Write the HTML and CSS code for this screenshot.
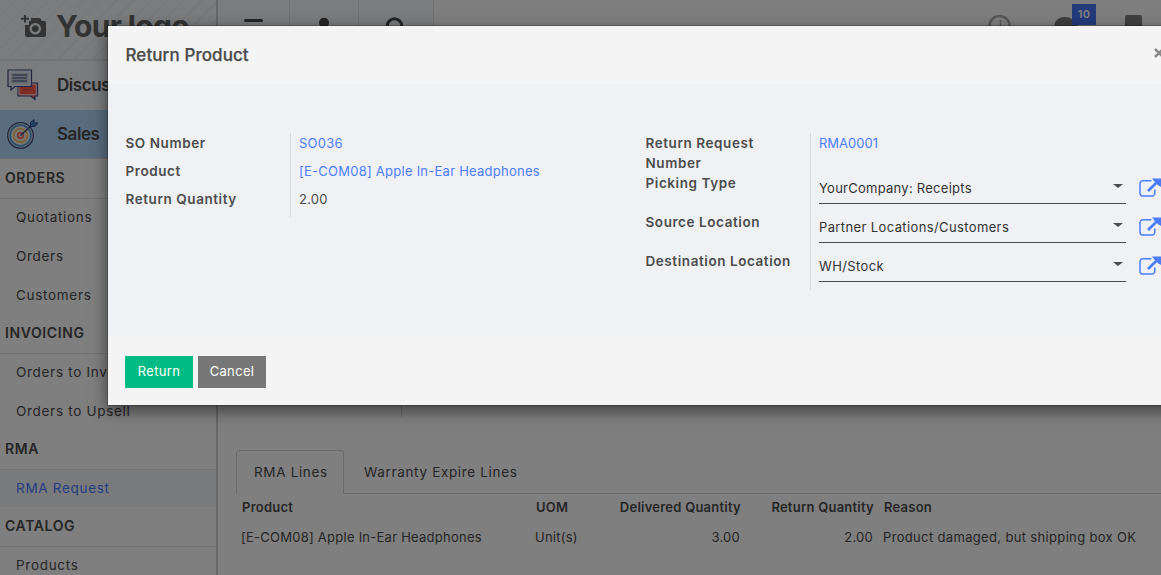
FILE: index.html
```html
<!DOCTYPE html>
<html lang="en">
<head>
<meta charset="utf-8">
<title>Return Product</title>
<link rel="stylesheet" href="styles.css">
</head>
<body>
<svg class="defs" width="0" height="0">
  <symbol id="external" viewBox="0 0 22 20">
    <path d="M12.400 2.800H4A2.700 2.700 0 0 0 1 5.500V15.300A2.700 2.700 0 0 0 4 18H13A2.700 2.700 0 0 0 15.800 15.300V11.500" fill="none" stroke="currentColor" stroke-width="1.500"/>
    <path d="M9 13 18 4.300" fill="none" stroke="currentColor" stroke-width="2.700"/>
    <path d="M13 .500H22V9L19.200 7.200 15.300 3.400Z" fill="currentColor"/>
  </symbol>
</svg>
<div class="app">
  <aside class="sidebar">
    <div class="logo">
      <svg width="26" height="24" viewBox="0 0 26 24">
        <path fill="#666" fill-rule="evenodd" d="M11 4h9l2 3h2q2 0 2 2v12q0 2-2 2H7q-2 0-2-2V11h4V7h2ZM15.300 9a5.700 5.700 0 1 0 .01 0ZM15.300 11.300a3.400 3.400 0 1 1-.01 0Z"/>
        <path d="M5 1v7.500M1 4.700h8" stroke="#666" stroke-width="2"/>
      </svg>
      <span>Your logo</span>
    </div>
    <div class="app-link">
      <svg width="32" height="32" viewBox="0 0 32 32">
        <path d="M11 14H30.500V27H28V30.500L23.500 27H11Z" fill="#ff5c4d" stroke="#414c82" stroke-width="1.200"/>
        <path d="M12 15.200H29.300V25.800H12Z" fill="none" stroke="#e8edf8" stroke-width="1"/>
        <path d="M1 1H24.500V17.500H8L4 21V17.500H1Z" fill="#e8edf8" stroke="#414c82" stroke-width="1.200"/>
        <path d="M4 4H21.500V14.500H4Z" fill="#c8d0e0"/>
        <path d="M5.500 6H20M5.500 9H20M5.500 12H20" stroke="#6c7894" stroke-width="1.300"/>
        <path d="M17.500 20.500h7" stroke="#a8483f" stroke-dasharray="1.500 1"/>
      </svg>
      <span>Discuss</span>
    </div>
    <div class="app-link active">
      <svg width="32" height="32" viewBox="0 0 32 32">
        <circle cx="13.500" cy="17.500" r="12.800" fill="#f5f2ec" stroke="#414c82" stroke-width="1.300"/>
        <circle cx="13.500" cy="17.500" r="10.400" fill="none" stroke="#5aa2dc" stroke-width="2"/>
        <circle cx="13.500" cy="17.500" r="6.800" fill="none" stroke="#f0c878" stroke-width="2"/>
        <circle cx="13.500" cy="17.500" r="2.800" fill="#ffd8cc" stroke="#f0705c" stroke-width="1.800"/>
        <path d="M13.500 17.500 26 6" stroke="#414c82" stroke-width="1.300"/>
        <path d="M23.500 8.500V4.500L27 1.500V4.800L31 5 28 8.500Z" fill="#3d88d6" stroke="#414c82"/>
      </svg>
      <span>Sales</span>
    </div>
    <h4 class="first">ORDERS</h4>
    <a>Quotations</a>
    <a>Orders</a>
    <a>Customers</a>
    <h4>INVOICING</h4>
    <a>Orders to Invoice</a>
    <a>Orders to Upsell</a>
    <h4>RMA</h4>
    <a class="current">RMA Request</a>
    <h4>CATALOG</h4>
    <a>Products</a>
  </aside>
  <main class="main">
    <header class="topbar">
      <div class="tool"><svg width="22" height="20" viewBox="0 0 22 20"><path d="M3.500 3.500h16M3.500 10.800h16M3.500 18h16" stroke="#4c4c4c" stroke-width="3" stroke-linecap="round"/></svg></div>
      <div class="tool"><svg width="22" height="20" viewBox="0 0 22 20"><circle cx="10" cy="5.700" r="5" fill="#4c4c4c"/><path d="M1 20q1-8 9-8t9 8Z" fill="#4c4c4c"/></svg></div>
      <div class="tool"><svg width="22" height="20" viewBox="0 0 22 20"><circle cx="11.500" cy="9" r="7.200" fill="none" stroke="#4c4c4c" stroke-width="3"/><path d="m16 14 5 5" stroke="#4c4c4c" stroke-width="3"/></svg></div>
      <div class="systray">
        <svg width="24" height="24" viewBox="0 0 24 24"><circle cx="11.500" cy="12" r="10" fill="none" stroke="#b0b0b0" stroke-width="2.500"/><path d="M12.500 6v7H8" fill="none" stroke="#b0b0b0" stroke-width="1.500"/></svg>
        <div class="chat">
          <svg width="28" height="22" viewBox="0 0 28 22"><ellipse cx="11" cy="9" rx="10.500" ry="8" fill="#7c7c7c"/><path d="M22 8q8 5 1 12l3 2-9-2Z" fill="#7c7c7c"/></svg>
          <span class="badge">10</span>
        </div>
        <svg class="bookmark" width="17" height="20" viewBox="0 0 17 20"><path d="M2 0h13q2 0 2 2v18l-8.500-6L0 20V2q0-2 2-2Z" fill="#808080"/></svg>
      </div>
    </header>
    <section class="sheet">
      <div class="rule"></div>
      <nav class="tabs"><span class="tab on">RMA Lines</span><span class="tab">Warranty Expire Lines</span></nav>
      <div class="grid head"><span>Product</span><span>UOM</span><span class="num">Delivered Quantity</span><span class="num">Return Quantity</span><span>Reason</span></div>
      <div class="grid row"><span>[E-COM08] Apple In-Ear Headphones</span><span>Unit(s)</span><span class="num">3.00</span><span class="num">2.00</span><span class="reason">Product damaged, but shipping box OK</span></div>
    </section>
  </main>
</div>
<div class="backdrop">
  <div class="modal">
    <header class="modal-head"><h3>Return Product</h3><svg class="close" width="10" height="10" viewBox="0 0 10 10"><path d="m1 1 8 8M9 1 1 9" stroke="#8a8a8a" stroke-width="2.500"/></svg></header>
    <div class="modal-body">
      <div class="group">
        <div class="labels"><b>SO Number</b><b>Product</b><b>Return Quantity</b></div>
        <div class="values"><a>SO036</a><a>[E-COM08] Apple In-Ear Headphones</a><span>2.00</span></div>
      </div>
      <div class="group right">
        <div class="labels"><b class="wrap">Return Request Number</b><b class="tall">Picking Type</b><b class="tall">Source Location</b><b class="tall">Destination Location</b></div>
        <div class="values">
          <a class="request">RMA0001</a>
          <div class="field"><div class="select">YourCompany: Receipts<i></i></div><svg width="22" height="20"><use href="#external"/></svg></div>
          <div class="field"><div class="select wide">Partner Locations/Customers<i></i></div><svg width="22" height="20"><use href="#external"/></svg></div>
          <div class="field"><div class="select wide">WH/Stock<i></i></div><svg width="22" height="20"><use href="#external"/></svg></div>
        </div>
      </div>
    </div>
    <footer class="modal-foot"><button class="primary">Return</button><button>Cancel</button></footer>
  </div>
</div>
</body>
</html>
```
FILE: styles.css
```css
* { box-sizing: border-box; }
body { margin: 0; width: 1161px; height: 575px; overflow: hidden; position: relative; background: #fff; color: #4c4c4c; font: 13px/20px Inter, "Liberation Sans", sans-serif; letter-spacing: .25px; }
svg { display: block; flex: none; }
.defs { position: absolute; }
h3, h4 { margin: 0; }

.app { display: flex; height: 575px; overflow: hidden; }
.sidebar { width: 218px; flex: none; border-right: 2px solid #cfcfcf; }
.logo { height: 61px; border-bottom: 2px solid #e4e4e4; padding: 0 0 7px 20px; display: flex; align-items: center; gap: 10px; color: #666; font-size: 30px; font-weight: 700; letter-spacing: -.65px; background: repeating-linear-gradient(135deg, #f6f8fb 0 10px, #f1f3f6 10px 12px); }
.app-link { height: 49px; padding: 0 0 1px 7px; display: flex; align-items: center; gap: 18px; font-size: 17px; font-weight: 600; letter-spacing: -.45px; background: #f7f9fd; }
.app-link.active { height: 48px; background: #b4dafc; }
.sidebar h4 { height: 38px; padding-left: 5px; border-bottom: 1px solid #e4e6ea; font-size: 14px; font-weight: 600; line-height: 34px; letter-spacing: .6px; }
.sidebar h4.first { height: 41px; border-top: 1px solid #e0d8da; line-height: 38px; }
.sidebar a { display: block; height: 39px; padding-left: 16px; color: inherit; line-height: 37px; font-size: 13.500px; letter-spacing: .7px; }
.sidebar a.current { color: #4c7dff; background: #f0f4f9; background-clip: content-box; padding: 0 0 2px; text-indent: 16px; }

.main { flex: 1; min-width: 0; }
.topbar { height: 61px; display: flex; border-bottom: 2px solid #e4e4e4; }
.tool { width: 72px; padding: 17px 0 0 24px; border-right: 1px solid #e4e7ea; background: #f5f8fb; }
.tool + .tool { width: 69px; }
.tool + .tool + .tool { width: 75px; }
.systray { flex: 1; display: flex; justify-content: flex-end; align-items: flex-start; padding: 14px 19px 0 0; }
.chat { position: relative; margin: 2px 29px 0 42px; width: 42px; }
.badge { position: absolute; left: 18px; top: -12px; width: 24px; height: 21px; background: #4876f6; color: #fff; font-size: 11px; font-weight: 600; text-align: center; line-height: 20px; letter-spacing: .2px; }
.bookmark { margin-top: 1px; }

.sheet { padding: 299px 0 0 18px; }
.rule { width: 1px; height: 57px; margin-left: 165px; background: #d5d5d5; }
.tabs { display: flex; height: 44px; margin-top: 33px; border-bottom: 1px solid #d5d5d5; }
.tab { padding: 12px 20px; font-size: 13.500px; letter-spacing: .66px; }
.tab.on { width: 108px; height: 44px; padding: 11px 0 0 17px; border: 1px solid #d5d5d5; border-bottom: 0; border-radius: 4px 4px 0 0; background: #fff; }
.grid { display: grid; grid-template-columns: 294px 80px 125px 133px 270px; padding-left: 5px; line-height: 32px; white-space: nowrap; }
.head { padding-left: 6px; font-weight: 600; line-height: 27px; letter-spacing: .24px; }
.num { text-align: right; }
.grid span:last-child { padding-left: 10px; }
.grid .reason { letter-spacing: .34px; }

.backdrop { position: absolute; inset: 0; background: rgba(0, 0, 0, .5); overflow: hidden; padding: 25px 0 0 107px; }
.modal { width: 1078px; height: 381px; border: 1px solid rgba(0, 0, 0, .2); background: #f4f4f4; background-clip: padding-box; box-shadow: 0 5px 15px rgba(0, 0, 0, .5); }
.modal-head { height: 58px; padding: 0 20px 0 17.500px; display: flex; align-items: center; justify-content: space-between; }
.modal-head h3 { font-size: 17px; font-weight: 500; letter-spacing: .08px; -webkit-text-stroke: .25px #4c4c4c; }
.close { margin-bottom: 4px; }
.modal-body { height: 253px; padding: 49px 0 0 17px; display: flex; background: #f0f1f5; }
.group { width: 520px; flex: none; display: flex; align-items: flex-start; }
.labels { width: 165px; flex: none; padding-left: .5px; }
.labels b { display: block; height: 28px; font-size: 13.500px; font-weight: 600; letter-spacing: .57px; }
.values { border-left: 1px solid #d8d9d8; padding-left: 8px; height: 84px; flex: 1; }
.values > a, .values > span { display: block; height: 28px; }
.values a { color: #4c7dff; }
.right .values { height: 157px; }
.labels b.wrap { height: 40px; }
.labels b.tall { height: 39px; }
.values > a.request { height: 40px; letter-spacing: 0; }
.field { display: flex; height: 39px; gap: 13px; color: #4c7dff; }
.field svg { margin-top: 5px; }
.select { width: 307px; height: 31px; padding-top: 5px; border-bottom: 1px solid #4c4c4c; display: flex; justify-content: space-between; color: #333; letter-spacing: .26px; }
.select.wide { letter-spacing: .38px; }
.select i { margin: 6px 3.500px 0 0; width: 0; height: 0; border: 5px solid transparent; border-top: 4.500px solid #4c4c4c; border-bottom: 0; }
.modal-foot { padding: 19px 17px; display: flex; gap: 5px; }
button { width: 68px; height: 32px; padding: 0 0 2px; border: 0; background: #777; color: #fff; font: 13px Inter, "Liberation Sans", sans-serif; letter-spacing: .35px; }
.primary { background: #00bb83; }
```
